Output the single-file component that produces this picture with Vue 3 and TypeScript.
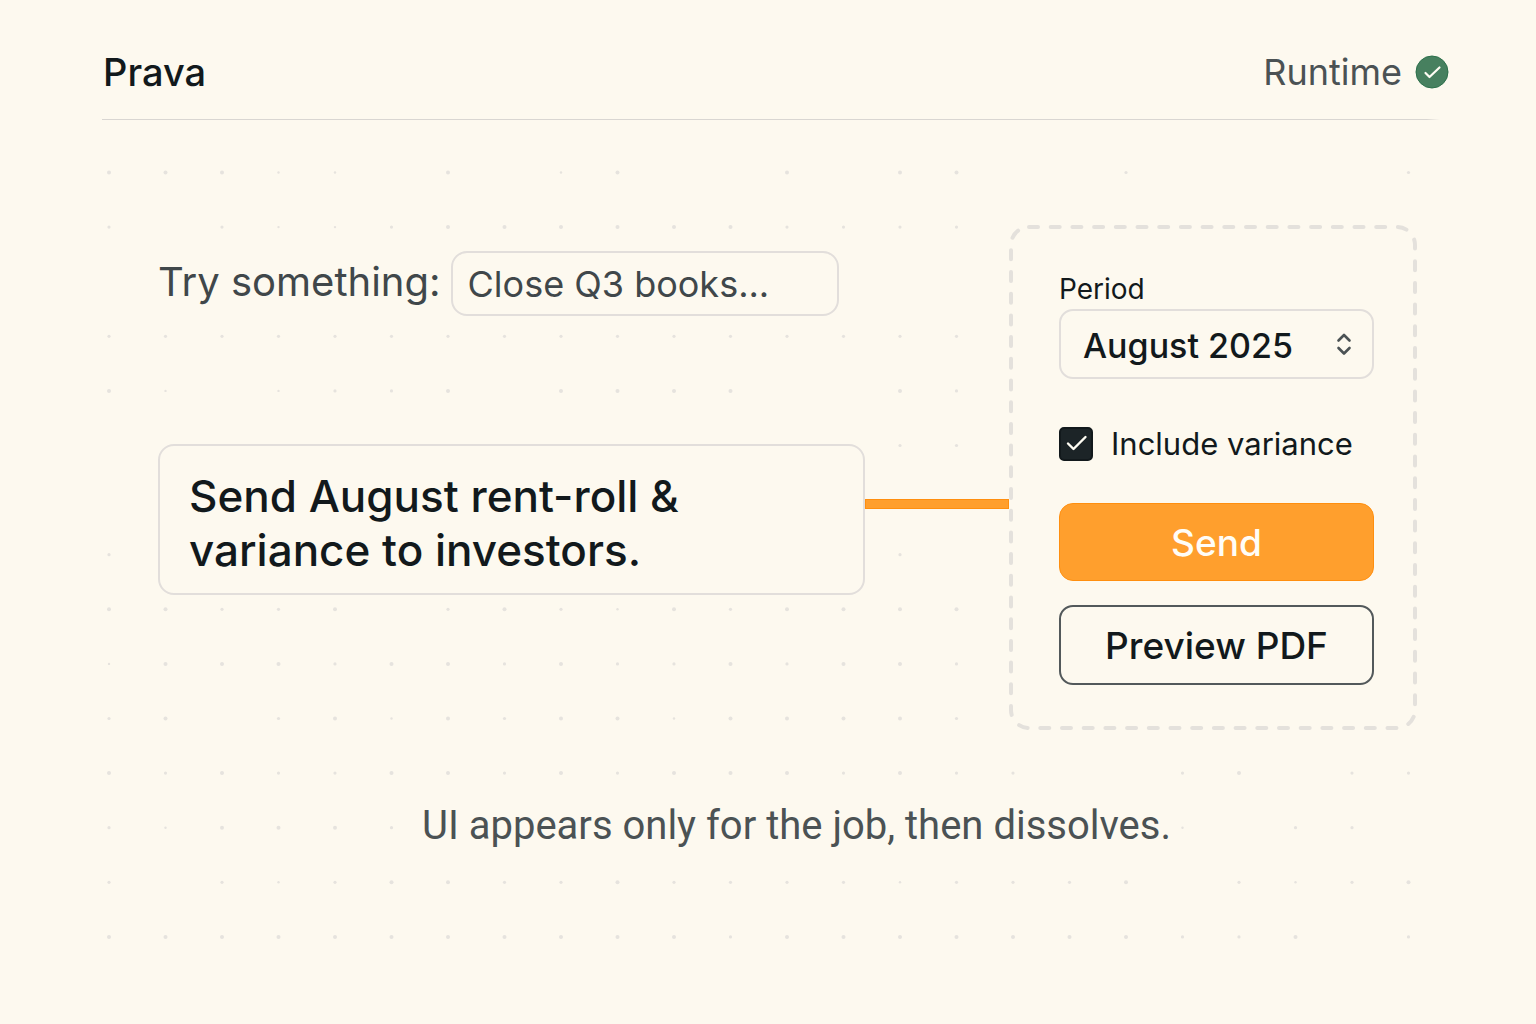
<script setup lang="ts">
import { computed, ref } from 'vue'

const prompt = ref('')
const period = ref('August 2025')
const periods = ['July 2025', 'August 2025', 'September 2025']
const includeVariance = ref(true)

// Strength of every grid dot: 0 is a gap, 3 the most visible.
const dotRows = [
  '333110301300303300200002',
  '202112333333222200000000',
  '000000000000000000000000',
  '222222222222222200000000',
  '310122303333003200000000',
  '000000000000002200000000',
  '000000000000000000000000',
  '200000000000002000000000',
  '332230232132333300000000',
  '133323323223233200000000',
  '230231323313333200000000',
  '323223323233323220023022',
  '213332000000000000010220',
  '202123322322221222302123',
  '333333333332333333322302',
]

const dots = computed(() =>
  dotRows.flatMap((row, r) =>
    [...row].map((level, c) => ({
      id: `${r}-${c}`,
      x: `${((109 + c * 56.5) / 1536) * 100}%`,
      y: 172.5 + r * 54.6,
      size: Number(level),
    })),
  ).filter((dot) => dot.size > 0),
)
</script>

<template>
  <div class="page">
    <svg class="dots" aria-hidden="true">
      <circle v-for="dot in dots" :key="dot.id" :cx="dot.x" :cy="dot.y" :r="0.8 + dot.size * 0.4" />
    </svg>

    <header class="header">
      <h1 class="brand">Prava</h1>
      <div class="status">
        <span>Runtime</span>
        <svg class="badge" viewBox="0 0 34 34" aria-hidden="true">
          <circle cx="17" cy="17" r="16" fill="#47805f" stroke="#2c704b" stroke-width="1" />
          <path d="M10.5 18l4 4L24.5 12.500" fill="none" stroke="#fffdf4" stroke-width="2.200" stroke-linecap="round" stroke-linejoin="round" />
        </svg>
      </div>
    </header>
    <div class="rule"></div>

    <main class="workspace">
      <div class="ask">
        <label for="prompt">Try something:</label>
        <input id="prompt" v-model="prompt" type="text" placeholder="Close Q3 books..." />
      </div>

      <p class="request">Send August rent-roll &amp;<br />variance to investors.</p>
      <div class="connector"></div>

      <form class="panel" @submit.prevent>
        <svg class="outline" aria-hidden="true"><rect x="2" y="2" rx="18" /></svg>
        <label class="period-label" for="period">Period</label>
        <div class="select">
          <select id="period" v-model="period">
            <option v-for="item in periods" :key="item">{{ item }}</option>
          </select>
          <svg viewBox="0 0 16 24" aria-hidden="true"><path d="M2.500 8.500L8 3L13.500 8.500M2.500 16L8 21.500L13.500 16" /></svg>
        </div>
        <label class="check">
          <span class="box">
            <input v-model="includeVariance" type="checkbox" />
            <svg v-if="includeVariance" viewBox="0 0 34 34" aria-hidden="true"><path d="M9 16.500L14.500 22L26.500 10" /></svg>
          </span>
          <span>Include variance</span>
        </label>
        <button class="send" type="submit">Send</button>
        <button class="preview" type="button">Preview PDF</button>
      </form>
    </main>

    <p class="caption">UI appears only for the job, then dissolves.</p>
  </div>
</template>

<style>
body {
  margin: 0;
  background: #fdf9ef;
}
</style>

<style scoped>
.page {
  position: relative;
  min-height: 100vh;
  box-sizing: border-box;
  overflow: hidden;
  background: #fdf9ef;
  color: #12191c;
  font-family: Inter, "Liberation Sans", sans-serif;
}

.dots {
  position: absolute;
  inset: 0;
  width: 100%;
  height: 100%;
  fill: #e6e3de;
}

.header {
  position: relative;
  display: flex;
  align-items: center;
  justify-content: space-between;
  height: 119px;
  box-sizing: border-box;
  padding: 24px 87px 0 103px;
}

.brand {
  margin: 0;
  font-size: 38px;
  font-weight: 500;
  line-height: 48px;
}

.status {
  display: flex;
  align-items: center;
  gap: 13px;
  color: #4b5254;
  font-size: 36px;
  line-height: 48px;
}

.badge {
  width: 34px;
  height: 34px;
}

.rule {
  height: 1px;
  margin: 0 96px 0 102px;
  background: linear-gradient(to right, #d9d6d2 99%, transparent);
}

.workspace {
  position: relative;
  display: grid;
  grid-template-columns: minmax(0, 1fr) 144px 408px;
  grid-template-rows: 219px auto 1fr;
  padding: 105px 119px 0 158px;
}

.ask {
  grid-column: 1;
  grid-row: 1;
  display: flex;
  align-items: flex-start;
  gap: 10px;
  padding-top: 26px;
  color: #40474a;
}

.ask label {
  flex: none;
  font-size: 40px;
  line-height: 62px;
}

.ask input {
  width: 388px;
  height: 65px;
  box-sizing: border-box;
  padding: 0 15px;
  border: 2px solid #e2dedb;
  border-radius: 16px;
  outline: none;
  background: #fdf9ef;
  color: #40474a;
  font: 400 36px Inter, "Liberation Sans", sans-serif;
}

.ask input::placeholder {
  color: #40474a;
  opacity: 1;
}

.request {
  grid-column: 1;
  grid-row: 2;
  margin: 0;
  padding: 23px 29px 16px;
  border: 2px solid #e2dedb;
  border-radius: 16px;
  background: #fdf9ef;
  font-size: 44px;
  font-weight: 500;
  line-height: 54px;
}

.connector {
  grid-column: 2;
  grid-row: 2;
  height: 10px;
  box-sizing: border-box;
  margin-top: 55px;
  border: 1px solid #ff8f0f;
  background: #ff9f2d;
}

.panel {
  position: relative;
  grid-column: 3;
  grid-row: 1 / 4;
  display: flex;
  flex-direction: column;
  box-sizing: border-box;
  padding: 45px 43px 45px 50px;
  background: #fdf9ef;
  border-radius: 18px;
}

.outline {
  position: absolute;
  inset: 0;
  width: 100%;
  height: 100%;
  pointer-events: none;
}

.outline rect {
  width: calc(100% - 4px);
  height: calc(100% - 4px);
  fill: none;
  stroke: #e4e1dc;
  stroke-width: 4px;
  stroke-linecap: round;
  stroke-dasharray: 9 12.7;
}

.period-label {
  font-size: 28px;
  line-height: 38px;
}

.select {
  position: relative;
  height: 70px;
  margin-top: 1px;
}

.select select {
  width: 100%;
  height: 100%;
  box-sizing: border-box;
  padding: 2px 56px 0 22px;
  border: 2px solid #e2dedb;
  border-radius: 14px;
  appearance: none;
  background: transparent;
  color: #12191c;
  font: 500 34px Inter, "Liberation Sans", sans-serif;
}

.select svg {
  position: absolute;
  top: 23px;
  right: 22px;
  width: 16px;
  height: 24px;
  fill: none;
  stroke: #4b5254;
  stroke-width: 2.6;
  stroke-linecap: round;
  stroke-linejoin: round;
  pointer-events: none;
}

.check {
  display: flex;
  align-items: center;
  gap: 18px;
  margin-top: 46px;
  font-size: 31px;
  line-height: 38px;
  white-space: nowrap;
}

.box {
  position: relative;
  flex: none;
  width: 34px;
  height: 34px;
}

.box input {
  width: 34px;
  height: 34px;
  margin: 0;
  display: block;
  appearance: none;
  border: 2px solid #12191c;
  border-radius: 5px;
}

.box input:checked {
  background: #1c2427;
}

.box svg {
  position: absolute;
  inset: 0;
  fill: none;
  stroke: #fffdf4;
  stroke-width: 2.4;
  stroke-linecap: round;
  stroke-linejoin: round;
  pointer-events: none;
}

.send,
.preview {
  box-sizing: border-box;
  border-radius: 14px;
  font: 500 37px Inter, "Liberation Sans", sans-serif;
}

.send {
  height: 78px;
  margin-top: 40px;
  border: 1px solid #ff8f0f;
  background: #ff9f2d;
  color: #fffdf7;
}

.preview {
  height: 80px;
  margin-top: 24px;
  border: 2px solid #53595b;
  background: transparent;
  color: #12191c;
}

.caption {
  position: relative;
  margin: 72px 90px 0 147px;
  color: #4b5254;
  font: 400 40px/48px Roboto, "Liberation Sans", sans-serif;
  text-align: center;
}
</style>
